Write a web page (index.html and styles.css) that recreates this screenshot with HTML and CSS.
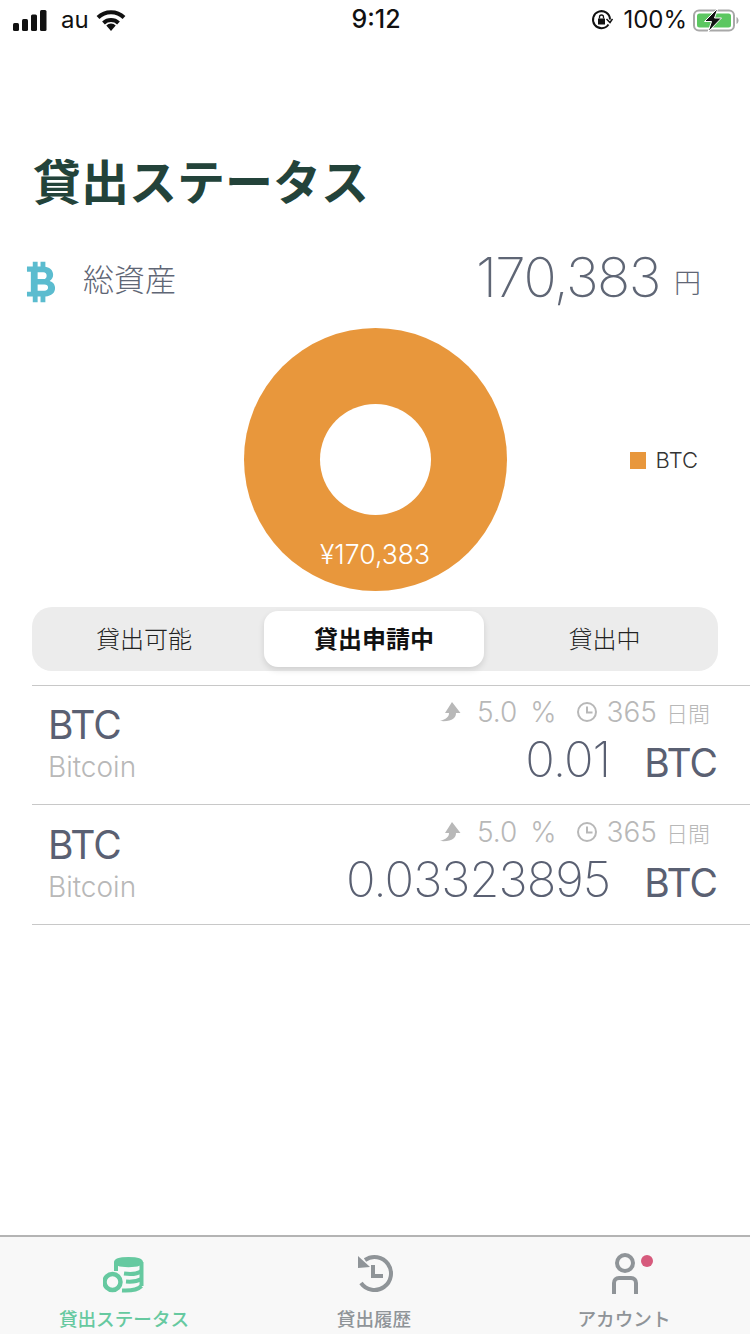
FILE: index.html
```html
<!DOCTYPE html>
<html lang="ja">
<head>
  <meta charset="UTF-8" />
  <title>貸出ステータス</title>
  <link rel="stylesheet" href="styles.css">
</head>
<body>
  <div class="app">
    <div class="statusbar">
      <div class="sb-left">
        <svg class="signal" width="34" height="21" viewBox="0 0 34 21"><rect x="0" y="13" width="6" height="8" rx="1.500"/><rect x="9" y="9" width="6" height="12" rx="1.500"/><rect x="18" y="4.500" width="6" height="16.500" rx="1.500"/><rect x="27" y="0" width="6.500" height="21" rx="1.500"/></svg>
        <span class="carrier">au</span>
        <svg class="wifi" width="30" height="22" viewBox="0 0 30 22"><path d="M2 8.500A18.500 18.500 0 0 1 28 8.500" fill="none" stroke="#111" stroke-width="4"/><path d="M7.500 14A11 11 0 0 1 22.500 14" fill="none" stroke="#111" stroke-width="4"/><path d="M15 22l-4.700-5.500A6.500 6.500 0 0 1 19.700 16.500z"/></svg>
      </div>
      <div class="sb-time">9:12</div>
      <div class="sb-right">
        <svg class="lock" width="22" height="22" viewBox="0 0 22 22" fill="none" stroke="#111" stroke-width="2"><path d="M17.500 15.500A8.500 8.500 0 1 1 19 10.500"/><path d="M15.500 10l3.500 3.500 2.500-3.500" stroke-width="1.500"/><rect x="7" y="9.500" width="7" height="6" fill="#111" stroke="none"/><path d="M8.500 9.500V8a2 2 0 0 1 4 0v1.500" stroke-width="1.300"/></svg>
        <span class="pct">100%</span>
        <svg class="batt" width="46" height="24" viewBox="0 0 46 24"><rect x="1" y="2.500" width="40" height="20" rx="5" fill="none" stroke="#a8a8a8" stroke-width="2"/><rect x="4" y="5.500" width="34" height="14" rx="2.500" fill="#5cc761"/><path d="M43.500 9v7c1.200-.5 2-2 2-3.500s-.8-3-2-3.500z" fill="#a8a8a8"/><path d="M25 0 11.500 13.500h7L15 24l13.500-14h-7z" fill="#111" stroke="#fff" stroke-width="1"/></svg>
      </div>
    </div>

    <h1 class="title">貸出ステータス</h1>

    <div class="total">
      <svg class="btc-icon" width="31" height="42" viewBox="0 0 32 42"><path fill="#5bbccf" fill-rule="evenodd" d="M7 0h5v5h3V0h5v5.300c5 .8 8 4 8 8.300 0 2.800-1.300 5-3.600 6.300 3.400 1 5.600 3.700 5.600 7.400 0 5-3.500 8.200-10 8.700V42h-5v-6h-3v6H7v-6H1v-5h4V10.500H1V5h6zm5 11v7h6c2 0 3.300-1.400 3.300-3.500S20 11 18 11zm0 12.500V30h7c2.400 0 3.800-1.300 3.800-3.300s-1.400-3.200-3.800-3.200z"/></svg>
      <span class="total-label">総資産</span>
      <span class="total-amount">170,383</span>
      <span class="total-unit">円</span>
    </div>

    <div class="chart-row">
      <div class="donut">
        <div class="donut-hole"></div>
        <span class="donut-label">¥170,383</span>
      </div>
      <div class="legend"><i class="legend-box"></i>BTC</div>
    </div>

    <div class="segment">
      <div class="seg-item seg-first">貸出可能</div>
      <div class="seg-item seg-active">貸出申請中</div>
      <div class="seg-item seg-last">貸出中</div>
    </div>

    <div class="list">
      <div class="row">
        <div class="coin">
          <div class="coin-code">BTC</div>
          <div class="coin-name">Bitcoin</div>
        </div>
        <div class="info">
          <div class="meta">
            <svg width="24" height="24" viewBox="0 0 24 24"><path fill="#b8b8b8" d="M14 2l8.500 11H18c0 5-4 9-16 8 6-2 9-4 9-8H7z"/></svg>
            <span class="meta-num rate">5.0</span><span class="meta-num pc">%</span>
            <svg class="clock" width="22" height="22" viewBox="0 0 22 22" fill="none" stroke="#b8b8b8" stroke-width="2"><circle cx="11" cy="11" r="9"/><path d="M11 5.500V11.500H16.500"/></svg>
            <span class="meta-num">365</span><span class="meta-unit">日間</span>
          </div>
          <div class="value"><span class="value-num">0.01</span><span class="value-unit">BTC</span></div>
        </div>
      </div>
      <div class="row">
        <div class="coin">
          <div class="coin-code">BTC</div>
          <div class="coin-name">Bitcoin</div>
        </div>
        <div class="info">
          <div class="meta">
            <svg width="24" height="24" viewBox="0 0 24 24"><path fill="#b8b8b8" d="M14 2l8.500 11H18c0 5-4 9-16 8 6-2 9-4 9-8H7z"/></svg>
            <span class="meta-num rate">5.0</span><span class="meta-num pc">%</span>
            <svg class="clock" width="22" height="22" viewBox="0 0 22 22" fill="none" stroke="#b8b8b8" stroke-width="2"><circle cx="11" cy="11" r="9"/><path d="M11 5.500V11.500H16.500"/></svg>
            <span class="meta-num">365</span><span class="meta-unit">日間</span>
          </div>
          <div class="value"><span class="value-num">0.03323895</span><span class="value-unit">BTC</span></div>
        </div>
      </div>
    </div>

    <div class="tabbar">
      <div class="tab tab-on">
        <svg width="44" height="40" viewBox="0 0 44 40" fill="none" stroke="#66c9a0" stroke-width="4"><path d="M12 9C12 3.500 39 3.500 39 9S12 14.500 12 9z" fill="#66c9a0" stroke-width="2"/><path d="M13 9v9M38.500 9v24"/><path d="M21 20.500C28 21.500 35 20.500 38.500 18M23 28.500C29 29 35 28 38.500 26M19 37.500C28 38 35 36.500 38.500 33"/><circle cx="9.500" cy="29" r="8" stroke-width="4.500"/></svg>
        <span>貸出ステータス</span>
      </div>
      <div class="tab">
        <svg width="40" height="40" viewBox="0 0 40 40" fill="none" stroke="#8f9498" stroke-width="4"><path d="M10 7A16.500 16.500 0 1 1 6 30"/><path d="M3 3l0 12 12-1z" fill="#8f9498" stroke="none"/><path d="M18 12V23H28"/></svg>
        <span>貸出履歴</span>
      </div>
      <div class="tab">
        <div class="acct">
          <svg width="30" height="42" viewBox="0 0 30 42" fill="none" stroke="#8f9498" stroke-width="4"><circle cx="15" cy="10" r="8"/><path d="M4 41V30c0-3 2-5 5-5h12c3 0 5 2 5 5v11"/></svg>
          <i class="badge"></i>
        </div>
        <span>アカウント</span>
      </div>
    </div>
  </div>
</body>
</html>
```

FILE: styles.css
```css
* { box-sizing: border-box; }
html, body { margin: 0; padding: 0; }
body { width: 750px; height: 1334px; background: #fff; font-family: Inter, "Noto Sans CJK JP", sans-serif; overflow: hidden; }
.app { position: relative; display: flex; flex-direction: column; height: 1334px; }

.statusbar { height: 40px; display: flex; align-items: center; justify-content: space-between; padding: 0 11px 0 13px; color: #111; }
.sb-left { display: flex; align-items: center; width: 200px; }
.signal { fill: #111; }
.carrier { font-size: 24px; margin-left: 14px; margin-bottom: 2px; }
.wifi { fill: #111; margin-left: 7px; }
.sb-time { font-size: 25px; font-weight: 500; margin-bottom: 2px; }
.sb-right { display: flex; align-items: center; justify-content: flex-end; width: 200px; }
.lock { margin-right: 10px; }
.pct { font-size: 24px; margin-right: 6px; margin-bottom: 2px; }

.title { margin: 111px 0 0 33px; font-size: 48px; line-height: 56px; font-weight: 700; color: #23433a; font-family: "Noto Sans CJK JP", sans-serif; }

.total { display: flex; align-items: center; height: 60px; margin-top: 43px; padding-left: 26px; color: #5f6675; }
.btc-icon { flex: none; margin-top: 4px; }
.total-label { font-size: 31px; margin: 0 0 6px 26px; font-family: "Noto Sans CJK JP", sans-serif; font-weight: 300; }
.total-amount { margin: 0 0 6px auto; font-size: 55px; font-weight: 200; letter-spacing: -1.500px; }
.total-unit { font-size: 27px; margin: 2px 49px 0 14px; font-family: "Noto Sans CJK JP", sans-serif; font-weight: 300; }

.chart-row { position: relative; display: flex; justify-content: center; margin-top: 18px; height: 264px; }
.donut { position: relative; display: flex; align-items: center; justify-content: center; width: 263px; height: 263px; border-radius: 50%; background: #e8973c; }
.donut-hole { width: 111px; height: 111px; border-radius: 50%; background: #fff; }
.donut-label { position: absolute; left: 0; right: 0; bottom: 21px; text-align: center; color: #fff; font-size: 26.500px; font-weight: 300; }
.legend { position: absolute; right: 52px; top: 119px; display: flex; align-items: center; gap: 10px; font-size: 22px; color: #333; font-weight: 300; }
.legend-box { width: 16px; height: 17px; background: #e8973c; }

.segment { display: flex; align-items: center; margin: 15px 32px 0; height: 64px; background: #ececec; border-radius: 20px; font-family: "Noto Sans CJK JP", sans-serif; }
.seg-item { text-align: center; font-size: 24px; line-height: 30px; color: #222; font-weight: 300; padding-bottom: 3px; }
.seg-first { flex: none; width: 232px; padding-right: 8px; }
.seg-last { flex: 1; padding-left: 7px; }
.seg-active { flex: none; width: 220px; height: 56px; line-height: 54px; padding: 0; background: #fff; border-radius: 14px; font-weight: 700; color: #111; box-shadow: 0 3px 6px rgba(0,0,0,0.12); }

.list { margin: 14px 0 0 32px; border-top: 1px solid #c8c8c8; }
.row { display: flex; justify-content: space-between; height: 119px; padding: 0 33px 0 16px; border-bottom: 1px solid #c8c8c8; }
.row + .row { height: 120px; padding-top: 1px; }
.coin-code { font-size: 39px; line-height: 44px; color: #5a6072; margin-top: 17px; letter-spacing: -1px; }
.coin-name { font-size: 28px; line-height: 34px; color: #b8b8b8; margin-top: 3px; font-weight: 300; }
.info { display: flex; flex-direction: column; align-items: flex-end; }
.meta { display: flex; align-items: center; height: 28px; margin-top: 12px; color: #b8b8b8; margin-right: 7px; }
.meta-num { font-size: 28px; font-weight: 300; }
.rate { margin-left: 15px; }
.pc { margin-left: 13px; }
.clock { margin: 0 9px 0 19px; }
.meta-unit { font-size: 22px; margin-left: 9px; font-family: "Noto Sans CJK JP", sans-serif; font-weight: 300; }
.value { display: flex; align-items: baseline; margin-top: 6px; color: #5a6072; }
.value-num { font-size: 49px; font-weight: 200; line-height: 56px; letter-spacing: -1px; }
.value-unit { font-size: 39px; margin-left: 34px; letter-spacing: -1px; }

.tabbar { position: absolute; left: 0; right: 0; bottom: 0; height: 99px; display: flex; background: #f8f8f8; border-top: 2px solid #b4b4b4; }
.tab { flex: 1; display: flex; flex-direction: column; align-items: center; padding-top: 16px; color: #8f9498; font-size: 18.600px; font-weight: 500; font-family: "Noto Sans CJK JP", sans-serif; }
.tab span { margin: 11px 2px 0 0; line-height: 28px; }
.tab-on { color: #66c9a0; }
.acct { position: relative; height: 40px; }
.badge { position: absolute; top: 2px; right: -13px; width: 12px; height: 12px; border-radius: 50%; background: #d65a7c; }
```
